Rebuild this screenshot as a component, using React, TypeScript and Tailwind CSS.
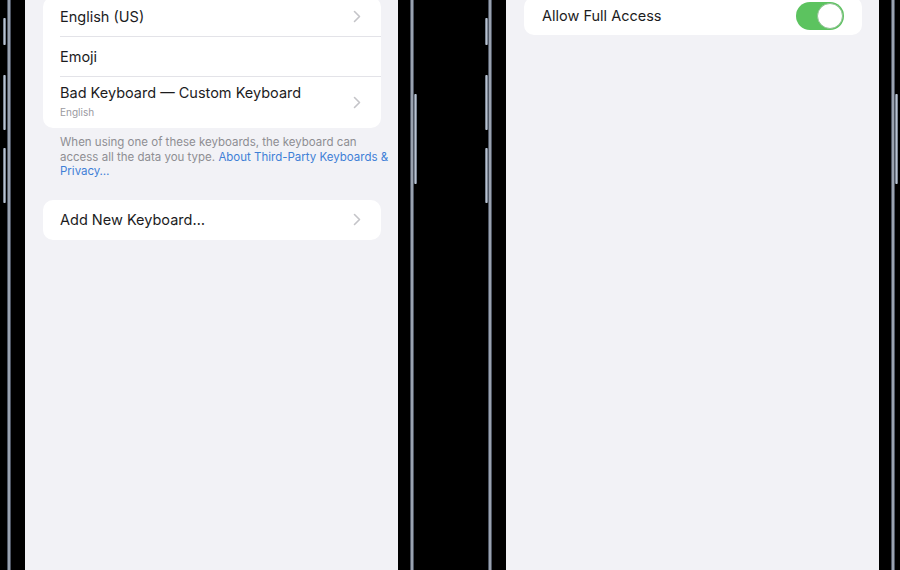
import React from "react";

const font = { fontFamily: "Inter, 'Noto Sans', sans-serif" };

const Chevron = () => (
  <svg width="8" height="13" viewBox="0 0 8 13" className="shrink-0">
    <polyline points="1.5,1.5 6.5,6.5 1.5,11.5" fill="none" stroke="#c4c4c8" strokeWidth="1.6" strokeLinecap="round" strokeLinejoin="round" />
  </svg>
);

const Rim = () => (
  <div className="h-full w-[4px] shrink-0 bg-linear-to-r from-[#2c3340] via-[#c2cbd8] to-[#2c3340]" />
);

const ButtonBar = ({ h }: { h: string }) => (
  <div className={`w-[3px] rounded-[1px] bg-linear-to-r from-[#5d6776] via-[#b9c3d0] to-[#5d6776] ${h}`} />
);

const LeftButtons = () => (
  <div className="flex w-[3px] shrink-0 flex-col">
    <div className="mt-[18px]">
      <ButtonBar h="h-[27px]" />
    </div>
    <div className="mt-[30px]">
      <ButtonBar h="h-[55px]" />
    </div>
    <div className="mt-[18px]">
      <ButtonBar h="h-[55px]" />
    </div>
  </div>
);

const PowerButton = () => (
  <div className="flex w-[3px] shrink-0 flex-col">
    <div className="mt-[94px]">
      <ButtonBar h="h-[90px]" />
    </div>
  </div>
);

const Row = ({
  title,
  sub,
  chevron,
  last,
}: {
  title: string;
  sub?: string;
  chevron?: boolean;
  last?: boolean;
}) => (
  <div className="flex pl-[17px]">
    <div
      className={`flex flex-1 items-center justify-between pr-[20px] ${sub ? "h-[51px]" : "h-[40px]"} ${
        last ? "" : "border-b border-[#e3e3e8]"
      }`}
    >
      <div className={`flex flex-col ${sub ? "pb-[3px]" : ""}`}>
        <span className="text-[14.5px] leading-[18px] text-[#1c1c1e]">{title}</span>
        {sub && <span className="mt-[4px] text-[10px] leading-[12px] text-[#9a9a9f]">{sub}</span>}
      </div>
      {chevron && <Chevron />}
    </div>
  </div>
);

export default function App() {
  return (
    <div className="flex h-[570px] w-[900px] overflow-hidden bg-black" style={font}>
      {/* left phone */}
      <div className="w-[3px] shrink-0" />
      <LeftButtons />
      <div className="w-[1px] shrink-0" />
      <Rim />
      <div className="w-[14px] shrink-0" />
      <div className="flex h-full w-[373px] shrink-0 flex-col bg-[#f2f2f6] px-[18px] pr-[17px]">
        <div className="-mt-[3px] overflow-hidden rounded-[10px] bg-white">
          <Row title="English (US)" chevron />
          <Row title="Emoji" />
          <Row title="Bad Keyboard — Custom Keyboard" sub="English" chevron last />
        </div>
        <p className="-mr-[14px] mt-[7px] pl-[17px] text-[11.5px] leading-[14.5px] text-[#8e8e93]">
          When using one of these keyboards, the keyboard can
          <br />
          access all the data you type.{" "}
          <span className="text-[#3f80d6]">
            About Third-Party Keyboards &amp;
            <br />
            Privacy…
          </span>
        </p>
        <div className="mt-[21px] overflow-hidden rounded-[10px] bg-white">
          <Row title="Add New Keyboard…" chevron last />
        </div>
      </div>
      <div className="w-[12px] shrink-0" />
      <Rim />
      <PowerButton />

      <div className="w-[68px] shrink-0" />

      {/* right phone */}
      <LeftButtons />
      <Rim />
      <div className="w-[14px] shrink-0" />
      <div className="flex h-full w-[373px] shrink-0 flex-col bg-[#f2f2f6] px-[18px] pr-[17px]">
        <div className="-mt-[3px] flex h-[38px] items-center justify-between rounded-[10px] bg-white pl-[18px] pr-[18px]">
          <span className="text-[14.5px] text-[#1c1c1e]">Allow Full Access</span>
          <div className="flex h-[28px] w-[48px] items-center justify-end rounded-full bg-[#5cc35f] pr-[1px]">
            <div className="h-[26px] w-[26px] rounded-full border border-[#8fbf92] bg-white" />
          </div>
        </div>
      </div>
      <div className="w-[12px] shrink-0" />
      <Rim />
      <PowerButton />
    </div>
  );
}
